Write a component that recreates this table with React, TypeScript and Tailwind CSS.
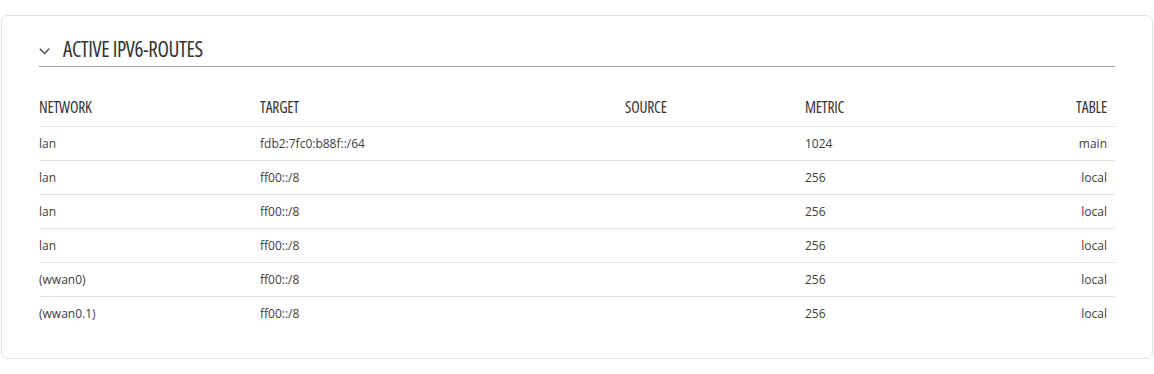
import React from "react";

const rows = [
  ["lan", "fdb2:7fc0:b88f::/64", "", "1024", "main"],
  ["lan", "ff00::/8", "", "256", "local"],
  ["lan", "ff00::/8", "", "256", "local"],
  ["lan", "ff00::/8", "", "256", "local"],
  ["(wwan0)", "ff00::/8", "", "256", "local"],
  ["(wwan0.1)", "ff00::/8", "", "256", "local"],
];

const cond: React.CSSProperties = { fontFamily: '"Open Sans", sans-serif', fontStretch: "condensed" };

export default function App() {
  return (
    <div className="w-[1154px] h-[374px] bg-white pt-[15px] px-px">
      <div className="border border-[#e2e2e2] rounded-[7px] h-[344px] px-[37px] pt-[21px]">
        <div className="flex items-center h-[30px] border-b border-[#a0a0a0] pb-[3px]">
          <svg width="11" height="7" viewBox="0 0 11 7" className="mr-[13px] mt-[2px]">
            <path d="M0.8 0.8 L5.5 5.5 L10.2 0.8" fill="none" stroke="#444" strokeWidth="1.3" />
          </svg>
          <span className="text-[21px] tracking-[-0.4px] font-medium text-[#333] uppercase" style={cond}>
            Active IPv6-Routes
          </span>
        </div>
        <div className="mt-[25px]">
          <div
            className="grid grid-cols-[221px_365px_180px_1fr_1fr] h-[35px] pb-[3px] items-center border-b border-[#e2e2e2] text-[15.5px] tracking-[-0.2px] font-medium text-[#333]"
            style={cond}
          >
            <div>NETWORK</div>
            <div>TARGET</div>
            <div>SOURCE</div>
            <div>METRIC</div>
            <div className="text-right pr-[8px]">TABLE</div>
          </div>
          {rows.map((r, i) => (
            <div
              key={i}
              className={`grid grid-cols-[221px_365px_180px_1fr_1fr] h-[34px] items-center text-[12px] text-[#404040] ${
                i < rows.length - 1 ? "border-b border-[#e2e2e2]" : ""
              }`}
              style={{ fontFamily: '"Open Sans", sans-serif' }}
            >
              <div>{r[0]}</div>
              <div>{r[1]}</div>
              <div>{r[2]}</div>
              <div>{r[3]}</div>
              <div className="text-right pr-[8px]">{r[4]}</div>
            </div>
          ))}
        </div>
      </div>
    </div>
  );
}
